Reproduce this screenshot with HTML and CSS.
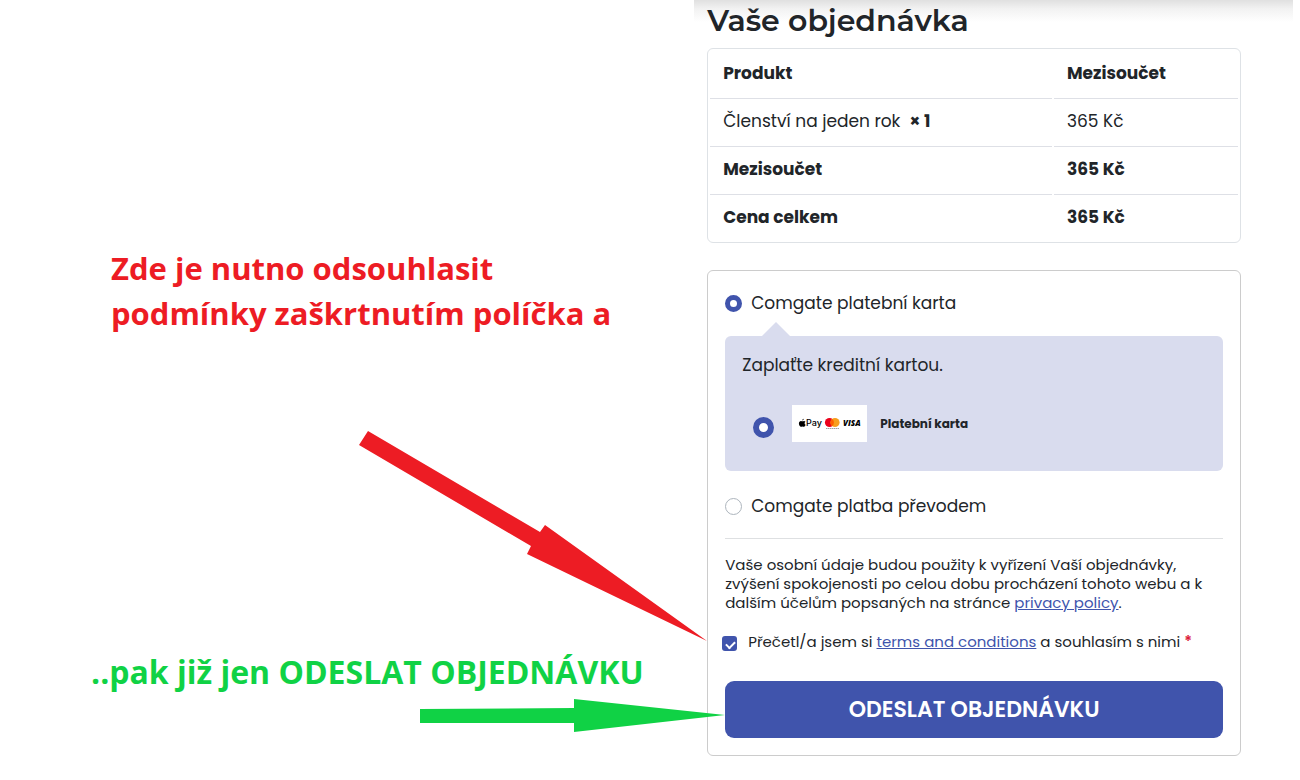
FILE: index.html
```
<!DOCTYPE html>
<html lang="cs">
<head>
	<meta charset="UTF-8">
	<meta name="viewport" content="width=device-width, initial-scale=1">
	<title>Vaše objednávka</title>
	<link rel="stylesheet" href="styles.css">
</head>
<body>
	<div class="page">
		<aside class="guide">
			<p class="note note-red">Zde je nutno odsouhlasit<br>podmínky zaškrtnutím políčka a</p>
			<svg class="arrow arrow-red" width="348" height="210" viewBox="0 0 348 210" aria-hidden="true">
				<path fill="#ed1c24" d="M9 0L181 101L186 94L348 210L168 123L172 115L0 14Z"/>
			</svg>
			<p class="note note-green">..pak již jen ODESLAT OBJEDNÁVKU</p>
			<svg class="arrow arrow-green" width="305" height="33" viewBox="0 0 305 33" aria-hidden="true">
				<path fill="#10d245" d="M0 10L154 9V0L305 16L154 33V24H0Z"/>
			</svg>
		</aside>
		<main class="order">
			<h1>Vaše objednávka</h1>
			<table class="order-table">
				<thead>
					<tr><th>Produkt</th><th>Mezisoučet</th></tr>
				</thead>
				<tbody>
					<tr><td>Členství na jeden rok &nbsp;<strong>× 1</strong></td><td>365 Kč</td></tr>
				</tbody>
				<tfoot>
					<tr><th>Mezisoučet</th><th>365 Kč</th></tr>
					<tr><th>Cena celkem</th><th>365 Kč</th></tr>
				</tfoot>
			</table>
			<form class="payment">
				<div class="method">
					<input type="radio" name="method" id="card" checked>
					<label for="card">Comgate platební karta</label>
				</div>
				<div class="payment-box">
					<p>Zaplaťte kreditní kartou.</p>
					<div class="card-option">
						<input type="radio" name="option" id="option" checked>
						<label for="option">
							<svg width="75" height="37" viewBox="0 0 75 37" aria-hidden="true">
								<rect width="75" height="37" fill="#fff"/>
								<path d="M11.800 13.800c-.9.1-1.500.8-1.400 1.600.8 0 1.400-.8 1.400-1.600zM12.600 18.200c0-.7.4-1.200.9-1.500-.4-.5-.9-.8-1.500-.8s-1 .3-1.500.3-.9-.3-1.500-.3c-1.200 0-2.100 1-2.100 2.500 0 1.700 1.100 3.400 2.100 3.400.5 0 .8-.3 1.500-.3s.9.3 1.400.3c.7 0 1.400-1 1.700-2-.7-.3-1-.9-1-1.600z"/>
								<text class="logo-pay" x="14" y="21">Pay</text>
								<circle cx="37.500" cy="17.500" r="4.600" fill="#eb001b"/>
								<circle cx="43" cy="17.500" r="4.600" fill="#f79e1b"/>
								<path fill="#ff5f00" d="M40.200 13.900a4.600 4.600 0 0 1 0 7.200a4.600 4.600 0 0 1 0-7.200z"/>
								<path stroke="#888" stroke-width=".8" stroke-dasharray="1.500 .5" d="M34 23.500h13"/>
								<text class="logo-visa" x="51" y="21">VISA</text>
							</svg>
							Platební karta
						</label>
					</div>
				</div>
				<div class="method">
					<input type="radio" name="method" id="transfer">
					<label for="transfer">Comgate platba převodem</label>
				</div>
				<div class="place-order">
					<p>Vaše osobní údaje budou použity k vyřízení Vaší objednávky, zvýšení spokojenosti po celou dobu procházení tohoto webu a k dalším účelům popsaných na stránce <a href="#">privacy policy</a>.</p>
					<div class="terms">
						<input type="checkbox" id="terms" checked>
						<label for="terms">Přečetl/a jsem si <a href="#">terms and conditions</a> a souhlasím s nimi <span class="required">*</span></label>
					</div>
					<button type="button">ODESLAT OBJEDNÁVKU</button>
				</div>
			</form>
		</main>
	</div>
</body>
</html>
```
FILE: styles.css
```
* {
	box-sizing: border-box;
}
body {
	margin: 0;
	background: #fff;
	color: #212529;
	font-family: Poppins, Inter, "Liberation Sans", sans-serif;
	font-size: 17px;
}
p, h1 {
	margin: 0;
}
a {
	color: #4054ac;
}
.page {
	display: grid;
	grid-template-columns: 53fr 40fr;
	padding-right: 59px;
}

/* left side: hints with arrows */
.guide {
	display: flex;
	flex-direction: column;
	padding-top: 246px;
}
.note {
	font: bold 32px/45px "Segoe UI", "Open Sans", sans-serif;
	white-space: nowrap;
}
.note-red {
	margin-left: 111px;
	color: #ed1c24;
	font-size: 31px;
}
.note-green {
	margin-left: 91px;
	color: #10d245;
}
.arrow {
	position: relative;
	z-index: 1;
	align-self: flex-end;
}
.arrow-red {
	margin: 95px 0 8px;
}
.arrow-green {
	margin: 5px -18px 0 0;
}

/* right side: checkout */
.order {
	position: relative;
	padding-bottom: 25px;
}
.order::before {
	content: "";
	position: absolute;
	z-index: -1;
	top: 0;
	left: -13px;
	right: -52px;
	height: 22px;
	background: linear-gradient(#e0e0e0, #f2f2f2 40%, #fff);
}
h1 {
	font: 600 30px/42px Montserrat, Inter, sans-serif;
	margin-bottom: 6px;
}
.order-table {
	width: 100%;
	margin-bottom: 27px;
	border: 1px solid #dee2e6;
	border-radius: 6px;
	border-spacing: 2px;
	line-height: 27px;
	text-align: left;
}
.order-table th, .order-table td {
	padding: 9px 13px;
	border-top: 1px solid #dee0e6;
}
.order-table thead th {
	border-top: 0;
}
.order-table th:first-child {
	width: 65%;
}
th, strong {
	font-weight: 700;
}
.payment {
	padding: 17px;
	border: 1px solid #ccc;
	border-radius: 6px;
}
input {
	appearance: none;
	flex: none;
	margin: 0;
	background: #fff;
}
input[type=radio] {
	width: 17px;
	height: 17px;
	border: 1px solid #adb5bd;
	border-radius: 50%;
}
input[type=radio]:checked {
	border: 5px solid #4054ac;
}
.method {
	display: flex;
	align-items: center;
	gap: 9px;
	height: 30px;
}
.payment-box {
	position: relative;
	margin: 18px 0 20px;
	padding: 16px 17px 29px;
	border-radius: 6px;
	background: #d9dcee;
}
.payment-box::before {
	content: "";
	position: absolute;
	top: -14px;
	left: 37px;
	border: 14px solid transparent;
	border-top: 0;
	border-bottom-color: #d9dcee;
}
.payment-box p {
	line-height: 26px;
}
.card-option {
	display: flex;
	align-items: center;
	gap: 18px;
	margin: 27px 11px 0;
}
.card-option input[type=radio] {
	width: 21px;
	height: 21px;
	border-width: 6px;
	margin-top: 8px;
}
.card-option label {
	display: flex;
	align-items: center;
	gap: 13px;
	font-size: 12px;
	font-weight: 700;
}
.logo-pay {
	font: 500 9px Inter, sans-serif;
}
.logo-visa {
	font: italic 800 8px "Open Sans", sans-serif;
}
.place-order {
	margin-top: 17px;
	padding-top: 16px;
	border-top: 1px solid #dee0e2;
	font-size: 15px;
	line-height: 19px;
}
.terms {
	display: flex;
	align-items: center;
	gap: 11px;
	margin: 19px 0 30px -3px;
}
input[type=checkbox] {
	width: 15px;
	height: 15px;
	margin-top: 5px;
	border-radius: 3px;
	background: #4054ac;
}
input[type=checkbox]:checked::before {
	content: "";
	display: block;
	width: 7px;
	height: 4px;
	margin: 5px 4px;
	border: solid #fff;
	border-width: 0 0 2px 2px;
	transform: rotate(-45deg);
}
.required {
	color: #dc1c3c;
	font-weight: 600;
}
button {
	width: 100%;
	height: 57px;
	border: 0;
	border-radius: 9px;
	background: #4054ac;
	color: #fff;
	font: 600 22px Poppins, Inter, sans-serif;
}
```
